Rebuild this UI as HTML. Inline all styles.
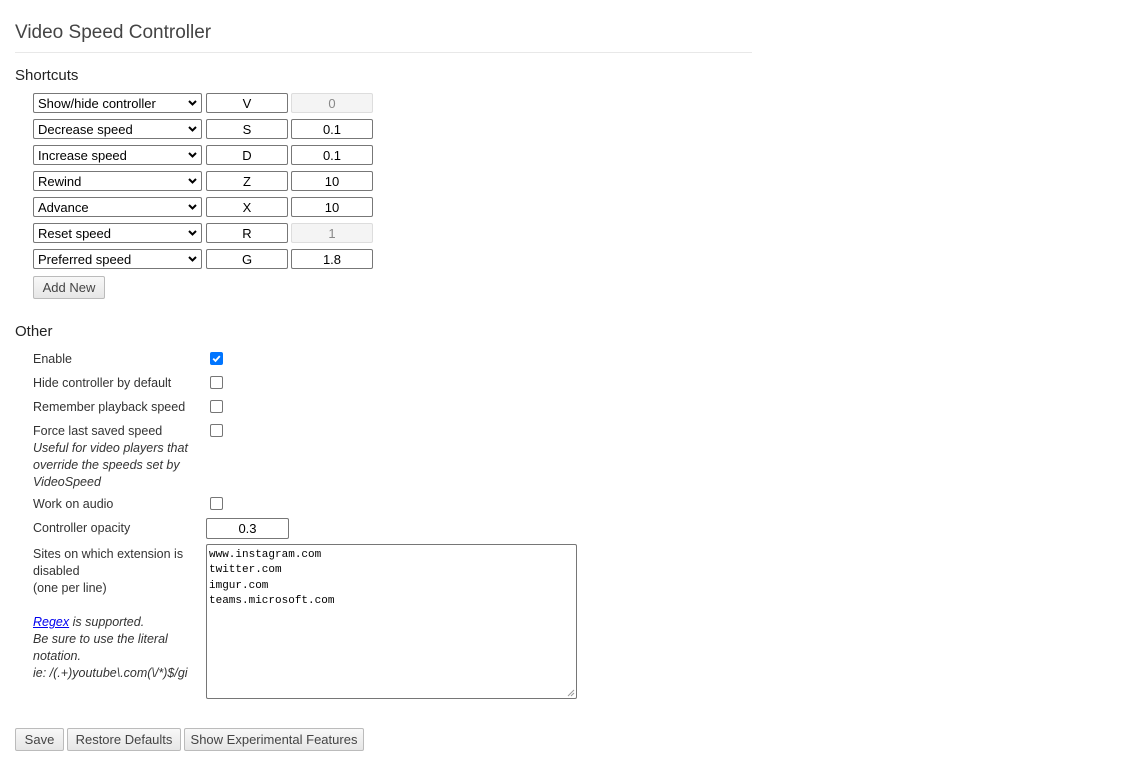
<!DOCTYPE html>
<html><head><meta charset="utf-8"><style>
*{box-sizing:border-box;margin:0;padding:0}
body{width:1136px;height:763px;background:#fff;position:relative;font-family:"Liberation Sans",sans-serif;color:#333;overflow:hidden}
.a{position:absolute}
h1{position:absolute;left:15px;top:21px;font-size:19px;font-weight:normal;color:#444;line-height:24px}
.hr{position:absolute;left:15px;top:52px;width:737px;height:1px;background:#e8e8e8}
h2{position:absolute;left:15px;font-size:15px;font-weight:normal;color:#222;line-height:18px}
.sel{position:absolute;left:33px;width:169px;height:20px;border:1px solid #777;border-radius:2px;font-size:13px;color:#000;padding-left:4px;line-height:19px}
.sel svg{position:absolute;right:4px;top:6px}
.in{position:absolute;height:20px;border:1px solid #777;border-radius:2px;font-size:13px;color:#000;text-align:center;line-height:19px}
.dis{background:#f4f4f4;border-color:#ddd;color:#888}
.btn{position:absolute;height:23px;border:1px solid #bbb;background:linear-gradient(#f8f8f8,#e6e6e6);font-size:13px;color:#444;text-align:center;line-height:22px;border-radius:2px}
.lb{position:absolute;left:33px;font-size:12.5px;line-height:17px;color:#333}
.cb{position:absolute;left:210px;width:13px;height:13px;border:1px solid #767676;border-radius:2px;background:#fff}
i{font-style:italic}
</style></head><body>
<h1>Video Speed Controller</h1>
<div class="hr"></div>
<h2 style="top:67px">Shortcuts</h2>

<div class="sel" style="top:93px">Show/hide controller<svg width="9" height="6"><path d="M1 1l3.5 3.5L8 1" stroke="#000" stroke-width="2" fill="none"/></svg></div>
<div class="in" style="left:206px;width:82px;top:93px">V</div>
<div class="in dis" style="left:291px;width:82px;top:93px">0</div>

<div class="sel" style="top:119px">Decrease speed<svg width="9" height="6"><path d="M1 1l3.5 3.5L8 1" stroke="#000" stroke-width="2" fill="none"/></svg></div>
<div class="in" style="left:206px;width:82px;top:119px">S</div>
<div class="in" style="left:291px;width:82px;top:119px">0.1</div>

<div class="sel" style="top:145px">Increase speed<svg width="9" height="6"><path d="M1 1l3.5 3.5L8 1" stroke="#000" stroke-width="2" fill="none"/></svg></div>
<div class="in" style="left:206px;width:82px;top:145px">D</div>
<div class="in" style="left:291px;width:82px;top:145px">0.1</div>

<div class="sel" style="top:171px">Rewind<svg width="9" height="6"><path d="M1 1l3.5 3.5L8 1" stroke="#000" stroke-width="2" fill="none"/></svg></div>
<div class="in" style="left:206px;width:82px;top:171px">Z</div>
<div class="in" style="left:291px;width:82px;top:171px">10</div>

<div class="sel" style="top:197px">Advance<svg width="9" height="6"><path d="M1 1l3.5 3.5L8 1" stroke="#000" stroke-width="2" fill="none"/></svg></div>
<div class="in" style="left:206px;width:82px;top:197px">X</div>
<div class="in" style="left:291px;width:82px;top:197px">10</div>

<div class="sel" style="top:223px">Reset speed<svg width="9" height="6"><path d="M1 1l3.5 3.5L8 1" stroke="#000" stroke-width="2" fill="none"/></svg></div>
<div class="in" style="left:206px;width:82px;top:223px">R</div>
<div class="in dis" style="left:291px;width:82px;top:223px">1</div>

<div class="sel" style="top:249px">Preferred speed<svg width="9" height="6"><path d="M1 1l3.5 3.5L8 1" stroke="#000" stroke-width="2" fill="none"/></svg></div>
<div class="in" style="left:206px;width:82px;top:249px">G</div>
<div class="in" style="left:291px;width:82px;top:249px">1.8</div>

<div class="btn" style="left:33px;top:276px;width:72px">Add New</div>

<h2 style="top:323px">Other</h2>
<div class="lb" style="top:351px">Enable</div>
<div class="cb" style="top:352px;background:#0075ff;border-color:#0075ff"><svg width="11" height="11" style="position:absolute;left:0;top:0"><path d="M2.2 5.6l2.3 2.3 4.3-4.8" stroke="#fff" stroke-width="1.8" fill="none"/></svg></div>
<div class="lb" style="top:375px">Hide controller by default</div>
<div class="cb" style="top:376px"></div>
<div class="lb" style="top:399px">Remember playback speed</div>
<div class="cb" style="top:400px"></div>
<div class="lb" style="top:423px">Force last saved speed<br><i>Useful for video players that<br>override the speeds set by<br>VideoSpeed</i></div>
<div class="cb" style="top:424px"></div>
<div class="lb" style="top:496px">Work on audio</div>
<div class="cb" style="top:497px"></div>
<div class="lb" style="top:520px">Controller opacity</div>
<div class="in" style="left:206px;width:83px;top:518px;height:21px">0.3</div>
<div class="lb" style="top:546px">Sites on which extension is<br>disabled<br>(one per line)<br><br><i><span style="color:#00e;text-decoration:underline">Regex</span> is supported.<br>Be sure to use the literal<br>notation.<br>ie: /(.+)youtube\.com(\/*)$/gi</i></div>
<div class="a" style="left:206px;top:544px;width:371px;height:155px;border:1px solid #767676;border-radius:2px;font-family:'Liberation Mono',monospace;font-size:11px;line-height:15.3px;color:#000;padding:3px 2px">www.instagram.com<br>twitter.com<br>imgur.com<br>teams.microsoft.com
<svg width="8" height="8" style="position:absolute;right:1px;bottom:1px"><path d="M7 1L1 7M7 4L4 7" stroke="#999" stroke-width="1"/></svg></div>

<div class="btn" style="left:15px;top:728px;width:49px">Save</div>
<div class="btn" style="left:67px;top:728px;width:114px">Restore Defaults</div>
<div class="btn" style="left:184px;top:728px;width:180px">Show Experimental Features</div>
</body></html>
